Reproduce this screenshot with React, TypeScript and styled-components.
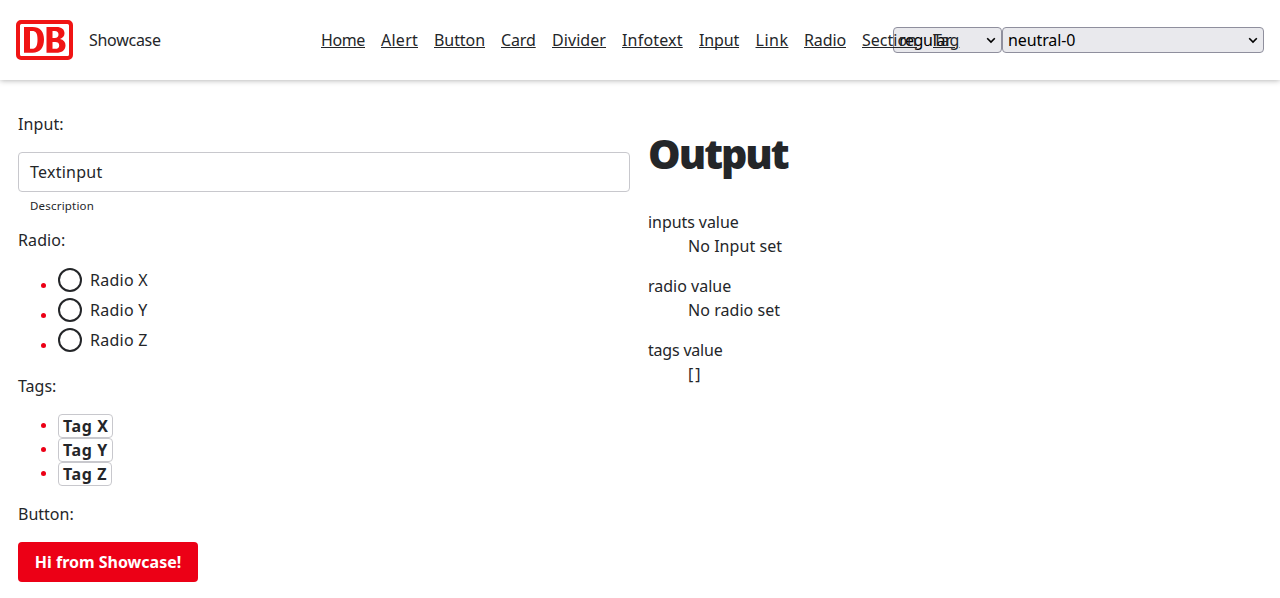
import React from "react";
import styled, { createGlobalStyle } from "styled-components";

const GlobalStyle = createGlobalStyle`
  * { box-sizing: border-box; }
  body {
    margin: 0;
    background: #fff;
    color: #242629;
    font-family: "Noto Sans", sans-serif;
    font-size: 16px;
    line-height: 24px;
  }
`;

const Text = styled.span<{ $track?: number }>`
  letter-spacing: ${(p) => p.$track ?? 0}px;
  white-space: nowrap;
`;

const Header = styled.header`
  display: grid;
  grid-template-columns: 305px 588px 1fr;
  align-items: center;
  height: 80px;
  padding-right: 16px;
  box-shadow: 0 0 6px rgba(0, 0, 0, 0.36);
`;

const Brand = styled.div`
  display: flex;
  align-items: center;
  gap: 16px;
  padding-left: 16px;
`;

const Logo = styled.svg`
  display: block;
  width: 57px;
  height: 40px;
`;

const Nav = styled.nav`
  display: flex;
  gap: 16px;
  padding-left: 16px;
  width: 588px;
  z-index: 1;
  pointer-events: none;
`;

const NavLink = styled.a<{ $width: number; $track: number; $skip: boolean }>`
  flex: none;
  width: ${(p) => p.$width}px;
  letter-spacing: ${(p) => p.$track}px;
  color: #242629;
  white-space: nowrap;
  text-decoration: underline;
  text-decoration-thickness: 1px;
  text-underline-offset: 1px;
  text-decoration-skip-ink: ${(p) => (p.$skip ? "auto" : "none")};
  pointer-events: auto;
`;

const Pickers = styled.div`
  display: flex;
`;

const Picker = styled.div<{ $width: number }>`
  display: flex;
  align-items: center;
  justify-content: space-between;
  width: ${(p) => p.$width}px;
  height: 26px;
  padding: 0 5px;
  border: 1px solid #8f8f9d;
  border-radius: 4px;
  background: #e9e9ed;
  color: #000;
`;

const Chevron = styled.svg`
  width: 10px;
  height: 10px;
`;

const Main = styled.main`
  display: grid;
  grid-template-columns: 612px 612px;
  gap: 18px;
  padding: 32px 18px 16px;
`;

const Column = styled.section``;

const Label = styled.p`
  margin: 0 0 16px;
`;

const Field = styled.div`
  display: flex;
  align-items: center;
  height: 40px;
  padding: 0 11px;
  border: 1px solid #c8c8cd;
  border-radius: 4px;
`;

const Hint = styled.div`
  height: 16px;
  margin: 6px 0 14px 12px;
  font-size: 11.5px;
  line-height: 16px;
`;

const List = styled.ul<{ $bottom: number }>`
  margin: 0 0 ${(p) => p.$bottom}px;
  padding: 0 0 0 23px;
  list-style: none;
`;

const Item = styled.li<{ $height: number }>`
  display: flex;
  align-items: flex-start;
  height: ${(p) => p.$height}px;
`;

const Bullet = styled.i<{ $top: number }>`
  flex: none;
  width: 5px;
  height: 5px;
  margin: ${(p) => p.$top}px 12px 0 0;
  border-radius: 50%;
  background: #ec0016;
`;

const Radio = styled.span`
  width: 24px;
  height: 24px;
  margin-right: 8px;
  border: 2px solid #242629;
  border-radius: 50%;
`;

const Tag = styled.span<{ $width: number }>`
  display: flex;
  align-items: center;
  width: ${(p) => p.$width}px;
  height: 24px;
  padding-left: 4px;
  border: 1px solid #c8c8cd;
  border-radius: 4px;
  font-weight: 700;
`;

const Button = styled.button`
  display: block;
  width: 180px;
  height: 40px;
  padding: 0;
  border: 0;
  border-radius: 4px;
  background: #ec0016;
  color: #fff;
  font: 700 16px/24px "Noto Sans", sans-serif;
`;

const Title = styled.h1`
  margin: 16px 0 32px;
  font-size: 41px;
  font-weight: 900;
  line-height: 50px;
`;

const Values = styled.dl`
  margin: 0;
`;

const Term = styled.dt``;

const Value = styled.dd`
  margin: 0 0 16px 40px;
`;

const links: [string, number, number][] = [
  ["Home", 44, -0.38],
  ["Alert", 37, 0.25],
  ["Button", 51, -0.07],
  ["Card", 35, -0.13],
  ["Divider", 54, 0.07],
  ["Infotext", 61, 0.19],
  ["Input", 40.5, -0.16],
  ["Link", 32.5, 0.5],
  ["Radio", 42, -0.12],
  ["Section", 55, 0],
  ["Tag", 26, 0],
];

const Arrow = () => (
  <Chevron viewBox="0 0 10 10" fill="none" stroke="#000" strokeWidth="1.6">
    <path d="M1.2 3.2 5 7l3.8-3.8" />
  </Chevron>
);

export default function App() {
  return (
    <>
      <GlobalStyle />
      <Header>
        <Brand>
          <Logo viewBox="0 0 57 40" fill="#f01414" fillRule="evenodd">
            <path d="M5 0h47a5 5 0 0 1 5 5v30a5 5 0 0 1-5 5H5a5 5 0 0 1-5-5V5a5 5 0 0 1 5-5ZM5.500 4A1.500 1.500 0 0 0 4 5.500v29A1.500 1.500 0 0 0 5.500 36h46a1.500 1.500 0 0 0 1.500-1.500v-29A1.500 1.500 0 0 0 51.500 4Z" />
            <path d="M8 7h8.500C24 7 28 11.500 28 19.500S24 32.800 16.500 32.800H8Zm6 4v17.800h2c4 0 5.500-3 5.500-9.300S20 11 16 11Z" />
            <path d="M30.500 7h10c5 0 8 2.300 8 6.300 0 3-1.700 4.700-4.500 5.700 3.500.7 5.500 3 5.500 6.300 0 5-3.500 7.500-9.500 7.500h-9.500Zm6 4v7h2.300c2.500 0 3.700-1.200 3.700-3.500S41.300 11 38.800 11Zm0 11v6.800h2.700c2.600 0 4-1.100 4-3.400S41.800 22 39.200 22Z" />
          </Logo>
          <Text $track={-0.28}>Showcase</Text>
        </Brand>
        <Nav>
          {links.map(([name, width, track]) => (
            <NavLink key={name} $width={width} $track={track} $skip={name === "Tag"}>{name}</NavLink>
          ))}
        </Nav>
        <Pickers>
          <Picker $width={109}><Text $track={-0.35}>regular</Text><Arrow /></Picker>
          <Picker $width={262}><Text $track={-0.1}>neutral-0</Text><Arrow /></Picker>
        </Pickers>
      </Header>
      <Main>
        <Column>
          <Label><Text $track={0.1}>Input:</Text></Label>
          <Field><Text $track={0.25}>Textinput</Text></Field>
          <Hint><Text $track={0.2}>Description</Text></Hint>
          <Label><Text $track={0.1}>Radio:</Text></Label>
          <List $bottom={16}>
            {["X", "Y", "Z"].map((n) => (
              <Item key={n} $height={30}>
                <Bullet $top={15} />
                <Radio />
                <Text $track={0.25}>Radio {n}</Text>
              </Item>
            ))}
          </List>
          <Label><Text>Tags:</Text></Label>
          <List $bottom={16}>
            {([["X", 55], ["Y", 55], ["Z", 54]] as [string, number][]).map(([n, w]) => (
              <Item key={n} $height={24}>
                <Bullet $top={9} />
                <Tag $width={w}><Text $track={0.6}>Tag {n}</Text></Tag>
              </Item>
            ))}
          </List>
          <Label><Text>Button:</Text></Label>
          <Button><Text>Hi from Showcase!</Text></Button>
        </Column>
        <Column>
          <Title><Text $track={-2}>Output</Text></Title>
          <Values>
            <Term><Text $track={-0.07}>inputs value</Text></Term>
            <Value><Text $track={0.05}>No Input set</Text></Value>
            <Term><Text>radio value</Text></Term>
            <Value><Text $track={0.05}>No radio set</Text></Value>
            <Term><Text $track={-0.2}>tags value</Text></Term>
            <Value><Text $track={2}>[]</Text></Value>
          </Values>
        </Column>
      </Main>
    </>
  );
}
